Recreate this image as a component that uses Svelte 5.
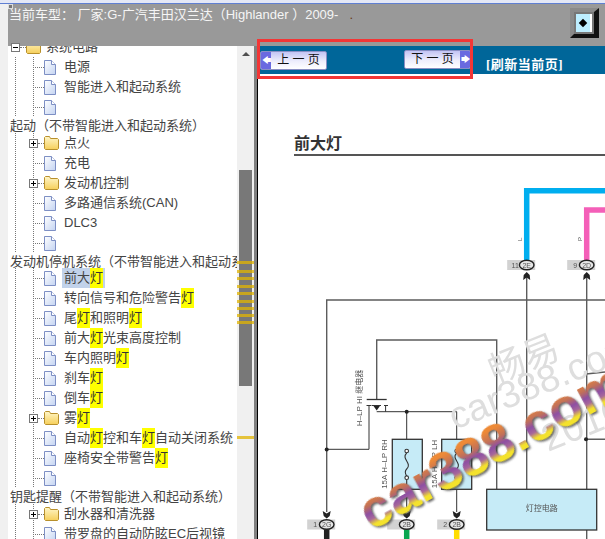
<script>
  const L = (t, sel) => ({ kind: 'leaf', t, sel });
  const F = (t) => ({ kind: 'folder', t });

  const rows = [
    { kind: 'root', t: '系统电路' },
    L('电源'), L('智能进入和起动系统'), L(''),
    { kind: 'head', t: '起动（不带智能进入和起动系统）' },
    F('点火'), L('充电'), F('发动机控制'), L('多路通信系统(CAN)'), L('DLC3'), L(''),
    { kind: 'head', t: '发动机停机系统（不带智能进入和起动系统）', short: true },
    L('前大灯', true), L('转向信号和危险警告灯'), L('尾灯和照明灯'), L('前大灯光束高度控制'),
    L('车内照明灯'), L('刹车灯'), L('倒车灯'), F('雾灯'),
    L('自动灯控和车灯自动关闭系统'), L('座椅安全带警告灯'), L(''),
    { kind: 'head', t: '钥匙提醒（不带智能进入和起动系统）' },
    F('刮水器和清洗器'), L('带罗盘的自动防眩EC后视镜')
  ];

  // split on the search hit so it can be painted yellow
  const parts = (t) => t.split(/(灯)/).filter(Boolean);

  const marks = [261, 270, 277, 285, 292, 300, 307, 314, 321, 436];

  const connectors = [
    { x: 526.7, y: 265, n: '11', c: '2E' },
    { x: 586.7, y: 265, n: '9', c: '2D' },
    { x: 326.7, y: 524.5, n: '1', c: '2G' },
    { x: 406.7, y: 524.5, n: '', c: '2B' },
    { x: 456.7, y: 524.5, n: '2', c: '2B' }
  ];
</script>

<div class="app">
  <div class="titlebar"></div>
  <div class="main">
    <div class="topbar">
      <span class="grip"></span>
      <span class="car">当前车型： 厂家:G-广汽丰田汉兰达（Highlander ）2009-<i class="dot">.</i></span>
      <button class="collapse"><span class="collapse-in"><span class="diamond"></span></span></button>
    </div>

    <div class="body">
      <div class="tree">
        <div class="list">
          {#each rows as r}
            {#if r.kind === 'head'}
              <div class="head" class:short={r.short}>{r.t}</div>
            {:else}
              <div class="row {r.kind}">
                {#if r.kind === 'leaf'}
                  <span class="conn"></span>
                  <svg class="page-ico" width="12" height="15" viewBox="0 0 12 15">
                    <path d="M.5.5h7l4 4v10H.5z" fill="url(#pageFill)" stroke="#7d8fc4" />
                    <path d="M7.5.5v4h4" fill="#fff" stroke="#7d8fc4" />
                  </svg>
                {:else}
                  <span class="toggle">
                    <span class="h"></span>
                    {#if r.kind === 'folder'}<span class="v"></span>{/if}
                  </span>
                  <span class="conn"></span>
                  <svg class="folder-ico" width="15" height="14" viewBox="0 0 15 14">
                    <path d="M.5 3V1.5l1-1h4l1 2h7l1 1v9l-1 1h-12l-1-1z" fill="url(#folderFill)" stroke="#b8902c" />
                  </svg>
                {/if}
                <span class="label" class:sel={r.sel}>
                  {#each parts(r.t) as p}
                    {#if p === '灯'}<mark>{p}</mark>{:else}{p}{/if}
                  {/each}
                </span>
              </div>
            {/if}
          {/each}
          <svg class="defs" width="0" height="0">
            <defs>
              <linearGradient id="pageFill" x1="0" y1="0" x2="1" y2="1">
                <stop offset="0" stop-color="#ffffff" />
                <stop offset="1" stop-color="#c4d4f2" />
              </linearGradient>
              <linearGradient id="folderFill" x1="0" y1="0" x2="0" y2="1">
                <stop offset="0" stop-color="#fff6c8" />
                <stop offset="1" stop-color="#f6cf5a" />
              </linearGradient>
              <linearGradient id="wm" x1="0" y1="0" x2="0" y2="1">
                <stop offset="0.24" stop-color="#ee8a36" />
                <stop offset="0.42" stop-color="#c0705a" />
                <stop offset="0.54" stop-color="#8d4fa4" />
                <stop offset="0.64" stop-color="#a8689a" />
                <stop offset="0.74" stop-color="#f4e22c" />
              </linearGradient>
            </defs>
          </svg>
        </div>
        <div class="scrollbar">
          <span class="up"></span>
          <span class="thumb"></span>
          {#each marks as m}
            <span class="mark" style="top: {m - 46}px"></span>
          {/each}
        </div>
      </div>

      <div class="split"></div>

      <div class="content">
        <div class="pager">
          <button class="btn prev"><span class="arrow">🡄</span><span class="cap">上 一 页</span></button>
          <button class="btn next"><span class="cap">下 一 页</span><span class="arrow">🡆</span></button>
          <span class="refresh">[刷新当前页]</span>
        </div>
        <div class="doc">
          <h2>前大灯</h2>
          <svg class="diagram" width="347" height="383" viewBox="258 156 347 383">
            <g class="wires" fill="none">
              <path d="M526.7 260V190.7H605" stroke="#00aeef" stroke-width="5.5" />
              <path d="M586.7 260V210H605" stroke="#f45fb8" stroke-width="5.5" />
              <path d="M326.7 529V539" stroke="#222" stroke-width="5.5" />
              <path d="M406.7 529V539" stroke="#0aa650" stroke-width="5.5" />
              <path d="M456.7 529V539" stroke="#ffdd00" stroke-width="5.5" />

              <g stroke="#5c5c5c" stroke-width="1.4">
                <path d="M326.7 512V300H605" />
                <path d="M376.7 400V340H496.7V489" />
                <path d="M526.7 276V489" />
                <path d="M586.7 276V490M586.7 530V539" />
                <path d="M586 439.3H605M586 374L605 372" />
              </g>
              <g stroke="#333" stroke-width="1">
                <path d="M366.7 399.5H386.7" stroke-width="1.3" />
                <path d="M366.5 405.5H371.5M369 405.5V449.3H326.7" />
                <path d="M372 405.5H381M384 405.5H388M385.6 405.5V411.7" />
                <path d="M376.7 411.7H456.7V512" />
                <path d="M406.7 411.7V451" />
              </g>
            </g>
            <path d="M373.5 406h6.4l-3.2 4.5z" fill="#222" />

            <g class="boxes" stroke="#333" stroke-width="1.3" fill="#c6ebf7">
              <rect x="392.3" y="439.3" width="30" height="50" />
              <rect x="441.7" y="439.3" width="30" height="50" />
              <rect x="486.7" y="489.3" width="110" height="40.7" />
            </g>
            <g fill="none" stroke="#333" stroke-width="1.1">
              <path d="M406.7 453c-6 6 6 10 0 16-2 2-2 4 0 7" />
              <path d="M406.7 480V512" />
              <circle cx="406.7" cy="451" r="1.8" fill="#fff" />
              <circle cx="406.7" cy="477.7" r="1.8" fill="#fff" />
              <path d="M456.7 453c-6 6 6 10 0 16-2 2-2 4 0 7" />
              <circle cx="456.7" cy="451" r="1.8" fill="#fff" />
              <circle cx="456.7" cy="477.7" r="1.8" fill="#fff" />
            </g>
            <g fill="#222">
              <circle cx="326.7" cy="449.5" r="2" />
              <circle cx="406.7" cy="411.7" r="2" />
              <circle cx="586" cy="439.3" r="2" />
            </g>

            {#each connectors as c}
              <rect x={c.x - 19.5} y={c.y - 5} width="28" height="10" fill="#d2d2d2" />
              {#if c.y < 300}
                <path d="M{c.x - 3.5} 280l.5-5 3-3 3 3 .5 5-3.5-2.5z" fill="#222" />
              {:else}
                <path d="M{c.x - 4} 511l1 5 3 2.5 3-2.5 1-5-4 2.5z" fill="#222" />
              {/if}
              <text class="pin" x={c.x - 11.5} y={c.y + 2.5} text-anchor="middle">{c.n}</text>
              <ellipse cx={c.x} cy={c.y} rx="7.3" ry="4.8" fill="#e6e6e6" stroke="#222" stroke-width="1.4" />
              <text class="pin" x={c.x} y={c.y + 2.6} text-anchor="middle">{c.c}</text>
            {/each}

            <text class="wire-l" transform="translate(521.5 241) rotate(-90)">L</text>
            <text class="wire-l" transform="translate(581.5 241) rotate(-90)">P</text>
            <text class="part" transform="translate(362 398) rotate(-90)" text-anchor="middle">H–LP HI 继电器</text>
            <text class="part" transform="translate(387 464) rotate(-90)" text-anchor="middle">15A H–LP RH</text>
            <text class="part" transform="translate(437 464) rotate(-90)" text-anchor="middle">15A H–LP LH</text>
            <text class="part" x="541.7" y="511" text-anchor="middle">灯控电路</text>

            <g class="wm-thin">
              <text class="wm-cn" transform="translate(495 384) rotate(-22)">畅易</text>
              <text class="wm-en" transform="translate(455 430) rotate(-22)">car388.com</text>
              <text class="wm-en" transform="translate(548 452) rotate(-22)">20165</text>
            </g>
            <text class="wm-big" transform="translate(371 531) rotate(-28)" fill="url(#wm)">car388.com</text>
          </svg>
        </div>
      </div>
    </div>
  </div>
  <div class="frame"></div>
</div>

<style>
  :global(body) {
    margin: 0;
    background: #f0f0f0;
  }

  button {
    padding: 0;
    font: inherit;
  }

  .app {
    position: relative;
    width: 605px;
    height: 539px;
    overflow: hidden;
    display: flex;
    flex-direction: column;
    font-family: "Liberation Sans", "Noto Sans CJK SC", sans-serif;
    font-size: 13px;
  }

  .titlebar {
    flex: none;
    height: 4px;
    box-sizing: border-box;
    background: #e4e8f6;
    border-bottom: 1px solid #5f7fd2;
  }

  .main {
    flex: 1;
    min-height: 0;
    margin-left: 8px;
    display: flex;
    flex-direction: column;
    background: #fff;
  }

  .topbar {
    position: relative;
    flex: none;
    height: 42px;
    box-sizing: border-box;
    padding: 2px 6px 0 1px;
    background: #999;
    color: #f5f5f5;
    display: flex;
    justify-content: space-between;
    align-items: flex-start;
  }

  .grip {
    position: absolute;
    left: 0;
    top: 0;
    width: 3px;
    height: 3px;
    background: #777;
    border: 1px solid #ddd;
  }

  .car {
    line-height: 18px;
    white-space: pre;
  }

  .dot {
    margin-left: 11px;
    color: #6b3a1a;
    font-style: normal;
  }

  .collapse {
    width: 29px;
    height: 30px;
    box-sizing: border-box;
    margin-top: 2px;
    background: #777;
    border-width: 4px 5px 4px 4px;
    border-style: solid;
    border-color: #8a8a8a #111 #111 #8a8a8a;
    display: flex;
  }

  .collapse-in {
    flex: 1;
    margin: 2px;
    background: #bdeeff;
    border-right: 2px solid #fff;
    display: flex;
    align-items: center;
    justify-content: center;
  }

  .diamond {
    width: 6px;
    height: 6px;
    background: #000;
    transform: rotate(45deg);
  }

  .body {
    flex: 1;
    min-height: 0;
    display: flex;
  }

  .tree {
    flex: none;
    width: 246px;
    display: flex;
  }

  .list {
    flex: none;
    width: 229px;
    overflow: hidden;
    margin-top: -9px;
    color: #444;
    line-height: 20px;
  }

  .defs {
    display: block;
  }

  .head {
    height: 16px;
    line-height: 16px;
    padding-left: 2px;
    padding-top: 1px;
    box-sizing: border-box;
    white-space: nowrap;
  }

  .head.short {
    height: 15px;
  }

  .row {
    height: 20px;
    display: flex;
    align-items: center;
    padding-left: 25px;
    white-space: nowrap;
    background-image:
      repeating-linear-gradient(#777 0 1px, transparent 1px 2px),
      repeating-linear-gradient(#777 0 1px, transparent 1px 2px);
    background-size: 1px 100%;
    background-position: 7px 0, 25px 0;
    background-repeat: no-repeat;
  }

  .row.folder {
    padding-left: 21px;
  }

  .row.root {
    padding-left: 3px;
    background: none;
  }

  .conn {
    flex: none;
    width: 11px;
    border-top: 1px dotted #777;
  }

  .folder .conn,
  .root .conn {
    width: 6px;
  }

  .page-ico,
  .folder-ico {
    flex: none;
  }

  .toggle {
    position: relative;
    flex: none;
    width: 9px;
    height: 9px;
    box-sizing: border-box;
    border: 1px solid #777;
    background: #fff;
  }

  .toggle .h {
    position: absolute;
    left: 1px;
    right: 1px;
    top: 3px;
    height: 1px;
    background: #000;
  }

  .toggle .v {
    position: absolute;
    top: 1px;
    bottom: 1px;
    left: 3px;
    width: 1px;
    background: #000;
  }

  .label {
    display: flex;
    height: 20px;
    margin-left: 6px;
    padding: 0 2px;
  }

  .folder .label,
  .root .label {
    margin-left: 3px;
  }

  .label.sel {
    background: #c1d2ea;
  }

  mark {
    background: #ff0;
    color: #333;
  }

  .scrollbar {
    position: relative;
    flex: none;
    width: 17px;
    background: #f0f0f0;
  }

  .up {
    position: absolute;
    left: 5px;
    top: 6px;
    border: 4px solid transparent;
    border-top: 0;
    border-bottom: 4px solid #505050;
  }

  .thumb {
    position: absolute;
    left: 2px;
    width: 13px;
    top: 124px;
    height: 216px;
    background: #787878;
  }

  .mark {
    position: absolute;
    left: 0;
    width: 17px;
    height: 3px;
    background: rgba(226, 180, 0, 0.75);
  }

  .split {
    flex: none;
    width: 4px;
    box-sizing: border-box;
    background: #808080;
    border-right: 1.5px solid #000;
  }

  .content {
    flex: 1;
    min-width: 0;
    display: flex;
    flex-direction: column;
  }

  .pager {
    flex: none;
    height: 28px;
    background: #069;
    display: flex;
    align-items: flex-start;
  }

  .btn {
    height: 19px;
    width: 67px;
    box-sizing: border-box;
    display: flex;
    align-items: stretch;
    border: 1px solid #8a8fc4;
    border-radius: 2px;
    background: linear-gradient(#c2c4f4, #eeeefc 55%, #fff);
    color: #111;
    font-size: 12px;
    overflow: hidden;
  }

  .prev {
    margin: 5px 0 0 2px;
  }

  .next {
    margin: 4px 0 0 77px;
  }

  .cap {
    flex: 1;
    line-height: 16px;
    text-align: center;
  }

  .arrow {
    flex: none;
    width: 10px;
    background: #6a6ae0;
    color: #fff;
    font-size: 9px;
    line-height: 17px;
    text-align: center;
  }

  .refresh {
    margin: 11px 0 0 15px;
    color: #fff;
    font-family: "Liberation Serif", "Noto Sans CJK SC", serif;
    font-weight: bold;
    font-size: 13px;
    letter-spacing: 0.5px;
    line-height: 16px;
  }

  .doc {
    flex: 1;
    min-height: 0;
    overflow: hidden;
  }

  h2 {
    margin: 60px 0 0 36px;
    height: 20px;
    line-height: 20px;
    font-size: 16px;
    font-weight: bold;
    color: #333;
    border-bottom: 2px solid #555;
  }

  .diagram {
    display: block;
    filter: blur(0.35px);
  }

  .pin {
    font-size: 7px;
    fill: #555;
  }

  .wire-l {
    font-size: 6px;
    fill: #555;
  }

  .part {
    font-size: 8px;
    fill: #555;
  }

  .wm-thin {
    fill: #dedede;
  }

  .wm-cn {
    font-size: 36px;
  }

  .wm-en {
    font-size: 38px;
  }

  .wm-big {
    font-size: 53px;
    font-weight: bold;
    filter: drop-shadow(1px 2px 1px rgba(60, 60, 60, 0.8));
  }

  .frame {
    position: absolute;
    left: 257px;
    top: 39px;
    width: 216px;
    height: 40px;
    box-sizing: border-box;
    border: 3px solid #f33636;
    pointer-events: none;
  }
</style>
